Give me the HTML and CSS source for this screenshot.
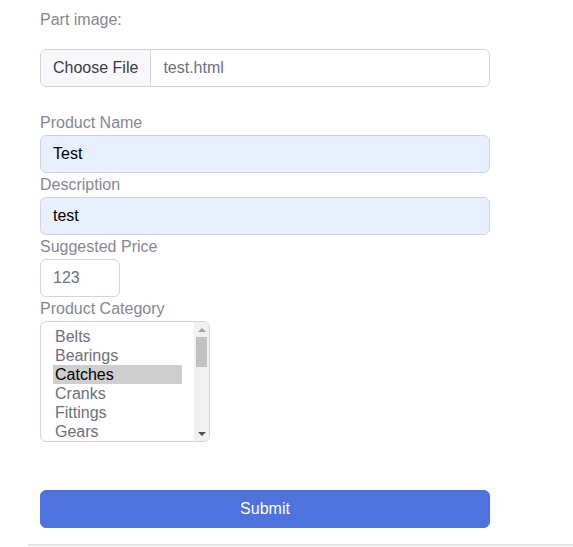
FILE: index.html
```html
<!DOCTYPE html>
<html>
<head>
<meta charset="utf-8">
<link rel="stylesheet" href="styles.css">
</head>
<body>
<div class="card">
  <form class="form">
    <label class="label label-first">Part image:</label>
    <div class="file">
      <span class="file-btn">Choose File</span>
      <span class="file-name">test.html</span>
    </div>
    <label class="label label-gap" for="name">Product Name</label>
    <input class="control filled" id="name" type="text" value="Test">
    <label class="label" for="desc">Description</label>
    <input class="control filled" id="desc" type="text" value="test">
    <label class="label" for="price">Suggested Price</label>
    <input class="control price" id="price" type="text" value="123">
    <label class="label" id="cat-label">Product Category</label>
    <div class="listbox" role="listbox" aria-labelledby="cat-label">
      <div class="options">
        <div class="option" role="option">Belts</div>
        <div class="option" role="option">Bearings</div>
        <div class="option selected" role="option" aria-selected="true">Catches</div>
        <div class="option" role="option">Cranks</div>
        <div class="option" role="option">Fittings</div>
        <div class="option" role="option">Gears</div>
      </div>
      <div class="scrollbar" aria-hidden="true">
        <div class="sb-btn"><span class="arrow-up"></span></div>
        <div class="sb-track"><div class="sb-thumb"></div></div>
        <div class="sb-btn"><span class="arrow-down"></span></div>
      </div>
    </div>
    <button class="submit" type="button">Submit</button>
  </form>
  <div class="footer-line"></div>
</div>
</body>
</html>
```

FILE: styles.css
```css
html, body {
  margin: 0;
  padding: 0;
  background: #ffffff;
}
body {
  font-family: "Liberation Sans", Arial, sans-serif;
  font-size: 16px;
  color: #858796;
}
.card {
  margin-left: 28px;
}
.form {
  width: 450px;
  padding: 8px 12px 0 12px;
  display: flex;
  flex-direction: column;
  align-items: flex-start;
}
.label {
  display: block;
  height: 24px;
  line-height: 24px;
  color: #858796;
}
.label-first {
  margin-bottom: 17px;
}
.label-gap {
  margin-top: 24px;
}
.file {
  box-sizing: border-box;
  width: 450px;
  height: 38px;
  display: flex;
  border: 1px solid #d1d3e2;
  border-radius: 6px;
  overflow: hidden;
}
.file-btn {
  display: flex;
  align-items: center;
  padding: 0 12px;
  background: #f8f8fc;
  border-right: 1px solid #d1d3e2;
  color: #3a3b45;
}
.file-name {
  display: flex;
  align-items: center;
  padding-left: 12px;
  color: #6e707e;
}
.control {
  box-sizing: border-box;
  height: 38px;
  width: 450px;
  margin: 0;
  padding: 0 12px;
  border: 1px solid #d1d3e2;
  border-radius: 6px;
  font-family: "Liberation Sans", Arial, sans-serif;
  font-size: 16px;
  color: #6e707e;
  background: #ffffff;
  outline: none;
}
.control.filled {
  background: #e8f0fe;
  color: #000000;
}
.control.price {
  width: 80px;
}
.listbox {
  box-sizing: border-box;
  width: 170px;
  height: 121px;
  display: flex;
  border: 1px solid #d1d3e2;
  border-radius: 6px;
  overflow: hidden;
  background: #ffffff;
}
.options {
  flex: 1;
  padding: 5px 12px 0 12px;
  overflow: hidden;
  color: #6e707e;
}
.option {
  height: 19px;
  line-height: 19px;
  padding: 0 2px;
  white-space: nowrap;
}
.option.selected {
  background: #cecece;
  color: #000000;
}
.scrollbar {
  width: 15px;
  display: flex;
  flex-direction: column;
  background: #f1f1f1;
}
.sb-btn {
  height: 15px;
  display: flex;
  align-items: center;
  justify-content: center;
}
.arrow-up {
  width: 0;
  height: 0;
  border-left: 4px solid transparent;
  border-right: 4px solid transparent;
  border-bottom: 4px solid #a3a3a3;
}
.arrow-down {
  width: 0;
  height: 0;
  border-left: 4px solid transparent;
  border-right: 4px solid transparent;
  border-top: 4px solid #505050;
}
.sb-track {
  flex: 1;
  padding: 0 2px;
}
.sb-thumb {
  height: 30px;
  background: #c1c1c1;
}
.submit {
  box-sizing: border-box;
  margin-top: 48px;
  width: 450px;
  height: 38px;
  border: 1px solid #4e73df;
  border-radius: 6px;
  background: #4e73df;
  color: #ffffff;
  font-family: "Liberation Sans", Arial, sans-serif;
  font-size: 16px;
}
.footer-line {
  margin-top: 16px;
  height: 2px;
  background: #e3e4ea;
}
```
